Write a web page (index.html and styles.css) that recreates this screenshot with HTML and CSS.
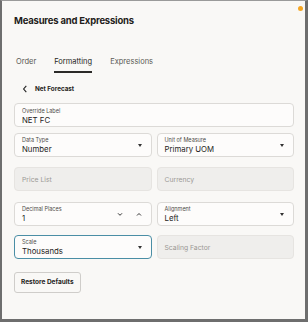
FILE: index.html
```html
<!DOCTYPE html>
<html>
<head>
<meta charset="utf-8">
<link rel="stylesheet" href="styles.css">
</head>
<body>
<div class="dialog">
  <span class="dot"></span>
  <h1 class="title">Measures and Expressions</h1>
  <div class="tabs">
    <span class="tab">Order</span>
    <span class="tab active">Formatting</span>
    <span class="tab">Expressions</span>
  </div>
  <div class="back">
    <svg class="back-icon" width="6" height="8" viewBox="0 0 6 8"><path d="M4.3 0.8 L1.6 4 L4.3 7.2" fill="none" stroke="#222" stroke-width="1.1"/></svg>
    <span>Net Forecast</span>
  </div>
  <div class="form">
    <div class="field full">
      <div class="label">Override Label</div>
      <div class="value">NET FC</div>
    </div>
    <div class="row r1">
      <div class="field">
        <div class="fbody"><div class="label">Data Type</div><div class="value">Number</div></div>
        <span class="caret"></span>
      </div>
      <div class="field">
        <div class="fbody"><div class="label">Unit of Measure</div><div class="value">Primary UOM</div></div>
        <span class="caret"></span>
      </div>
    </div>
    <div class="row r2">
      <div class="field disabled"><div class="placeholder">Price List</div></div>
      <div class="field disabled"><div class="placeholder">Currency</div></div>
    </div>
    <div class="row r3">
      <div class="field">
        <div class="fbody"><div class="label">Decimal Places</div><div class="value">1</div></div>
        <svg class="chev" width="6" height="5" viewBox="0 0 6 5"><path d="M1 1.3 L3 3.3 L5 1.3" fill="none" stroke="#333" stroke-width="1"/></svg>
        <svg class="chev up" width="6" height="5" viewBox="0 0 6 5"><path d="M1 3.5 L3 1.5 L5 3.5" fill="none" stroke="#333" stroke-width="1"/></svg>
      </div>
      <div class="field">
        <div class="fbody"><div class="label">Alignment</div><div class="value">Left</div></div>
        <span class="caret"></span>
      </div>
    </div>
    <div class="row r4">
      <div class="field focus">
        <div class="fbody"><div class="label">Scale</div><div class="value">Thousands</div></div>
        <span class="caret"></span>
      </div>
      <div class="field disabled"><div class="placeholder">Scaling Factor</div></div>
    </div>
    <div class="actions">
      <button class="btn">Restore Defaults</button>
    </div>
  </div>
</div>
</body>
</html>
```
FILE: styles.css
```css
* { box-sizing: border-box; }
html, body { margin: 0; padding: 0; }
body {
  width: 308px;
  height: 322px;
  font-family: Inter, "Noto Sans", "Liberation Sans", sans-serif;
  color: #1f1d1b;
  background: #f9f8f6;
}
.dialog {
  position: relative;
  width: 308px;
  height: 322px;
  background: #f9f8f6;
  border-left: 2px solid #6e6e6e;
  border-right: 3px solid #6e6e6e;
  border-top: 1px solid #9a9a9a;
  border-bottom: 3px solid #6e6e6e;
  display: flex;
  flex-direction: column;
}
.dot {
  position: absolute;
  top: 5px;
  right: 2px;
  width: 5px;
  height: 5px;
  border-radius: 50%;
  background: #f5a623;
}
.title {
  margin: 12px 0 0 12px;
  font-size: 9.5px;
  line-height: 15px;
  font-weight: 700;
  letter-spacing: -0.2px;
}
.tabs {
  display: flex;
  margin: 25px 0 0 14px;
  gap: 18px;
}
.tab {
  font-size: 7.5px;
  line-height: 18px;
  color: #5a5855;
  height: 20px;
  border-bottom: 2px solid transparent;
}
.tab.active {
  color: #1f1d1b;
  border-bottom-color: #2b2a28;
}
.back {
  display: flex;
  align-items: center;
  margin: 10px 0 0 20px;
  height: 12px;
  font-size: 6.3px;
  font-weight: 700;
  gap: 7px;
}
.form {
  display: flex;
  flex-direction: column;
  margin: 8px 0 0 12px;
  width: 280px;
}
.row {
  display: flex;
  gap: 5px;
}
.row.r1 { margin-top: 6px; }
.row.r2 { margin-top: 10px; }
.row.r3 { margin-top: 11px; }
.row.r4 { margin-top: 9px; }
.field {
  flex: 1;
  height: 24px;
  background: #fdfcfb;
  border: 1px solid #dcdad7;
  border-radius: 4px;
  display: flex;
  align-items: center;
  padding: 0 8px 0 7px;
}
.field.full { display: block; padding-top: 4px; flex: none; }
.fbody { flex: 1; padding-top: 1px; }
.label {
  font-size: 5.5px;
  line-height: 7px;
  color: #4e4c49;
}
.value {
  font-size: 7.8px;
  line-height: 10px;
  color: #1f1d1b;
}
.field.disabled {
  background: #efeeec;
  border-color: #e6e4e1;
}
.placeholder {
  font-size: 6.8px;
  color: #9b9995;
}
.caret {
  width: 0;
  height: 0;
  border-left: 2.5px solid transparent;
  border-right: 2.5px solid transparent;
  border-top: 3px solid #333;
  margin-right: 1px;
}
.chev.up { margin-left: 13px; margin-right: 1px; }
.field.focus { border-color: #4a8ea5; }
.actions { margin-top: 9px; }
.btn {
  height: 21px;
  padding: 0 6px;
  font-family: inherit;
  font-size: 6.5px;
  font-weight: 700;
  color: #1f1d1b;
  background: #f9f8f6;
  border: 1px solid #cfcdca;
  border-radius: 3px;
}
```
